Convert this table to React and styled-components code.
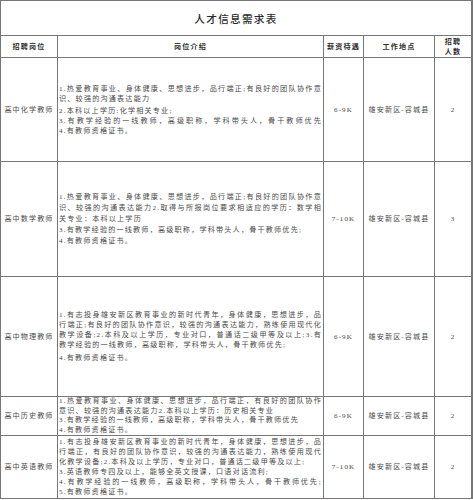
import React from "react";
import styled, { createGlobalStyle } from "styled-components";

const Global = createGlobalStyle`
  html, body { margin: 0; padding: 0; background: #ffffff; }
  body { font-family: "Liberation Serif", "Noto Sans CJK SC", serif; color: #333; }
`;

const Sheet = styled.div`
  width: 472px;
  display: grid;
  grid-template-columns: 56px 265px 39px 70px 36px;
  grid-template-rows: 34px 21px 103px 114px 119px 38px 62px;
  gap: 1px;
  padding: 1px;
  background: #777;
`;

const Cell = styled.div`
  background: #fff;
  display: flex;
  align-items: center;
  justify-content: center;
  text-align: center;
  font-size: 7.1px;
  letter-spacing: 1.1px;
  line-height: 10px;
  color: #4a4a4a;
`;

const TitleCell = styled(Cell)`
  grid-column: 1 / -1;
  font-size: 10.6px;
  letter-spacing: 1.3px;
  color: #2a2a2a;
  padding-top: 4px;
  font-weight: 500;
`;

const HeadCell = styled(Cell)`
  font-weight: 700;
  font-size: 7.1px;
  letter-spacing: 1.2px;
  color: #2e2e2e;
  flex-direction: column;
  line-height: 10px;
`;

const DescCell = styled(Cell)`
  flex-direction: column;
  align-items: stretch;
  justify-content: center;
  text-align: left;
  padding: 0 1px 0 1px;
  line-height: ${(p) => p.$lh || 10}px;
`;

const Line = styled.div`
  text-align: ${(p) => (p.$full ? "justify" : "left")};
  text-align-last: ${(p) => (p.$full ? "justify" : "left")};
  letter-spacing: 1.2px;
  white-space: nowrap;
  overflow: hidden;
  margin-top: ${(p) => p.$mt || 0}px;
`;

const rows = [
  {
    post: "高中化学教师",
    salary: "6-9K",
    count: "2",
    lh: 10,
    lines: [
      ["1.热爱教育事业、身体健康、思想进步，品行端正;有良好的团队协作意", true],
      ["识、较强的沟通表达能力", false],
      ["2.本科以上学历:化学相关专业;", false, 2],
      ["3.有教学经验的一线教师，高级职称，学科带头人，骨干教师优先", true],
      ["4.有教师资格证书。", false],
    ],
  },
  {
    post: "高中数学教师",
    salary: "7-10K",
    count: "3",
    lh: 11,
    lines: [
      ["1.热爱教育事业、身体健康、思想进步，品行端正;有良好的团队协作意", true],
      ["识、较强的沟通表达能力2.取得与所报岗位要求相适应的学历：数学相", true],
      ["关专业：本科以上学历", false],
      ["3.有教学经验的一线教师，高级职称，学科带头人，骨干教师优先;", false],
      ["4.有教师资格证书。", false],
    ],
  },
  {
    post: "高中物理教师",
    salary: "6-9K",
    count: "2",
    lh: 10,
    lines: [
      ["1.有志投身雄安新区教育事业的新时代青年，身体健康，思想进步，品", true],
      ["行端正;有良好的团队协作意识，较强的沟通表达能力，熟练使用现代化", true],
      ["教学设备;2.本科及以上学历，专业对口，普通话二级甲等及以上;3.有", true],
      ["教学经验的一线教师，高级职称，学科带头人，骨干教师优先;", false],
      ["4.有教师资格证书。", false, 3],
    ],
  },
  {
    post: "高中历史教师",
    salary: "6-9K",
    count: "2",
    lh: 9.7,
    lines: [
      ["1.热爱教育事业、身体健康、思想进步，品行端正，有良好的团队协作", true],
      ["意识、较强的沟通表达能力2.本科以上学历：历史相关专业", false],
      ["3.有教学经验的一线教师，高级职称，学科带头人，骨干教师优先", false],
      ["4.有教师资格证书。", false],
    ],
  },
  {
    post: "高中英语教师",
    salary: "7-10K",
    count: "2",
    lh: 10,
    lines: [
      ["1.有志投身雄安新区教育事业的新时代青年，身体健康，思想进步，品", true],
      ["行端正，有良好的团队协作意识，较强的沟通表达能力，熟练使用现代", true],
      ["化教学设备;2.本科及以上学历，专业对口，普通话二级甲等及以上;", false],
      ["3.英语教师专四及以上，能够全英文授课，口语对话流利;", false],
      ["4.有教学经验的一线教师，高级职称，学科带头人，骨干教师优先;", true],
      ["5.有教师资格证书。", false],
    ],
  },
];

export default function App() {
  return (
    <>
      <Global />
      <Sheet>
        <TitleCell>人才信息需求表</TitleCell>
        <HeadCell>招聘岗位</HeadCell>
        <HeadCell>岗位介绍</HeadCell>
        <HeadCell>薪资待遇</HeadCell>
        <HeadCell>工作地点</HeadCell>
        <HeadCell>
          <span>招聘</span>
          <span>人数</span>
        </HeadCell>
        {rows.map((r) => (
          <React.Fragment key={r.post}>
            <Cell>{r.post}</Cell>
            <DescCell $lh={r.lh}>
              {r.lines.map(([t, full, mt], i) => (
                <Line key={i} $full={full} $mt={mt}>
                  {t}
                </Line>
              ))}
            </DescCell>
            <Cell>{r.salary}</Cell>
            <Cell>雄安新区-容城县</Cell>
            <Cell>{r.count}</Cell>
          </React.Fragment>
        ))}
      </Sheet>
    </>
  );
}
